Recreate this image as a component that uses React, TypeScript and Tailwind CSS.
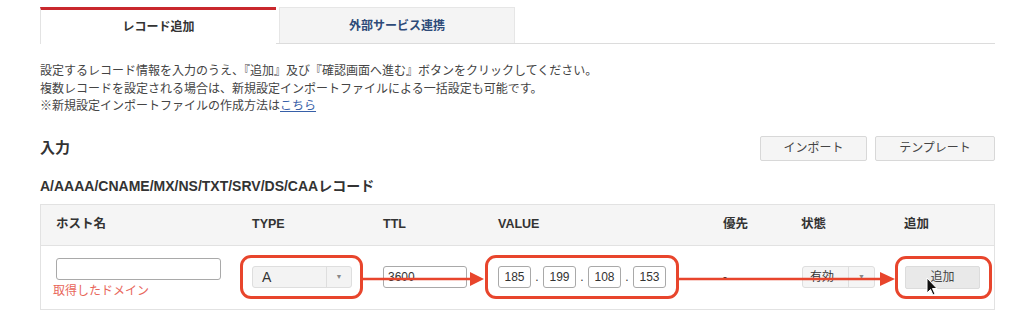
export default function App() {
  const cols = "grid grid-cols-[196px_131px_115px_225px_78px_103px_1fr]";

  return (
    <div className="h-[330px] w-[1024px] overflow-hidden bg-white font-['Liberation_Sans','Noto_Sans_CJK_JP',sans-serif] text-[#333]">
      <div className="pl-[40px] pr-[29px] pt-[7px]">
        {/* tabs */}
        <div className="flex items-end border-b border-[#dcdcdc]">
          <div className="-mb-px flex h-[37px] w-[236px] items-center justify-center border-l border-t-[3px] border-l-[#e3e3e3] border-t-[#c9282d] bg-white text-[12px] font-bold">
            レコード追加
          </div>
          <div className="ml-[3px] flex h-[36px] w-[236px] items-center justify-center border border-b-0 border-[#e6e6e6] bg-[#f4f4f4] text-[12px] font-bold text-[#2d4a78]">
            外部サービス連携
          </div>
        </div>

        {/* description */}
        <div className="mt-[19px] text-[12px] leading-[17.5px] text-[#444]">
          <p>設定するレコード情報を入力のうえ、『追加』及び『確認画面へ進む』ボタンをクリックしてください。</p>
          <p>複数レコードを設定される場合は、新規設定インポートファイルによる一括設定も可能です。</p>
          <p>
            ※新規設定インポートファイルの作成方法は
            <span className="text-[#3760a8] underline">こちら</span>
          </p>
        </div>

        {/* heading + buttons */}
        <div className="mt-[20px] flex items-center justify-between">
          <h2 className="text-[15px] font-bold">入力</h2>
          <div className="flex gap-[8px]">
            <button className="h-[25px] w-[107px] rounded-[2px] border border-[#d8d8d8] bg-[#f5f5f5] text-[12px] text-[#444]">
              インポート
            </button>
            <button className="h-[25px] w-[120px] rounded-[2px] border border-[#d8d8d8] bg-[#f5f5f5] text-[12px] text-[#444]">
              テンプレート
            </button>
          </div>
        </div>

        <h3 className="mt-[16px] text-[14px] font-bold leading-[18px]">A/AAAA/CNAME/MX/NS/TXT/SRV/DS/CAAレコード</h3>

        {/* table */}
        <div className="mt-[9px] border border-[#e2e2e2]">
          <div className={`${cols} h-[41px] items-center border-b border-[#e2e2e2] bg-[#f5f5f5] text-[12.5px] font-bold`}>
            <div className="pl-[15px]">ホスト名</div>
            <div className="pl-[15px]">TYPE</div>
            <div className="pl-[15px]">TTL</div>
            <div className="pl-[15px]">VALUE</div>
            <div className="pl-[15px]">優先</div>
            <div className="pl-[15px]">状態</div>
            <div className="pl-[15px]">追加</div>
          </div>

          <div className={`${cols} relative h-[63px] items-center text-[12px]`}>
            <div className="pl-[15px] pt-[4px]">
              <div className="h-[22px] w-[165px] rounded-[3px] border border-[#a9a9a9] bg-white" />
              <div className="-ml-[3px] mt-[2px] text-[12px] leading-[18px] text-[#e8665a]">取得したドメイン</div>
            </div>

            <div className="pl-[3px]">
              <div className="inline-flex rounded-[11px] border-[3px] border-[#e8452c] py-[8px] pl-[9px] pr-[8px]">
                <div className="flex h-[22px] w-[100px] rounded-[3px] border border-[#dedede] bg-[#f3f3f3]">
                  <span className="flex flex-1 items-center pl-[9px] text-[14px]">A</span>
                  <span className="flex w-[25px] items-center justify-center border-l border-[#dedede] text-[7px] text-[#888]">▼</span>
                </div>
              </div>
            </div>

            <div className="pl-[15px]">
              <div className="flex h-[22px] w-[84px] items-center rounded-[3px] border border-[#a9a9a9] pl-[4px]">3600</div>
            </div>

            <div className="pl-[2px]">
              <div className="inline-flex items-center rounded-[11px] border-[3px] border-[#e8452c] py-[8px] pl-[10px] pr-[10px]">
                {["185", "199", "108", "153"].map((n, i) => (
                  <div key={n} className="flex items-center">
                    {i > 0 && <span className="flex w-[12px] justify-center">.</span>}
                    <div className="flex h-[22px] w-[33px] items-center justify-center rounded-[3px] border border-[#a9a9a9]">{n}</div>
                  </div>
                ))}
              </div>
            </div>

            <div className="pl-[15px]">-</div>

            <div className="pl-[16px]">
              <div className="flex h-[22px] w-[73px] rounded-[3px] border border-[#dedede] bg-[#f5f5f5]">
                <span className="flex flex-1 items-center pl-[7px]">有効</span>
                <span className="flex w-[26px] items-center justify-center border-l border-[#dedede] text-[7px] text-[#888]">▼</span>
              </div>
            </div>

            <div className="pl-[6px]">
              <div className="inline-flex rounded-[11px] border-[3px] border-[#e8452c] py-[7px] pl-[7px] pr-[9px]">
                <button className="h-[23px] w-[75px] rounded-[2px] border border-[#dcdcdc] bg-[#e9e9e9] text-[12px] text-[#444]">追加</button>
              </div>
            </div>

            {/* annotation arrows */}
            <svg className="pointer-events-none absolute left-0 top-0" width="953" height="63" viewBox="0 0 953 63">
              <line x1="322" y1="33" x2="430" y2="33" stroke="#e8452c" strokeWidth="2.5" />
              <polygon points="429,26 443,33 429,40" fill="#e8452c" />
              <line x1="637" y1="33" x2="840" y2="33" stroke="#e8452c" strokeWidth="2.5" />
              <polygon points="839,26 854,33 839,40" fill="#e8452c" />
              <path d="M886 32 L886 47 L889.5 43.5 L892 49 L894 48 L891.5 42.5 L896 42.5 Z" fill="#111" stroke="#fff" strokeWidth="1" />
            </svg>
          </div>
        </div>
      </div>
    </div>
  );
}
